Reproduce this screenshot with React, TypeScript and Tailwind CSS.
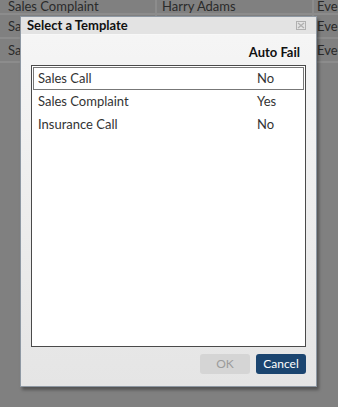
import React from "react";

const rows = [
  { name: "Sales Call", fail: "No", selected: true },
  { name: "Sales Complaint", fail: "Yes" },
  { name: "Insurance Call", fail: "No" },
];

export default function App() {
  const font = { fontFamily: "Lato, 'Open Sans', sans-serif" };
  return (
    <div className="relative w-[338px] h-[407px] overflow-hidden bg-[#808080]" style={font}>
      {/* background table (dimmed) */}
      <div className="flex flex-col text-[13px] text-[#2a2a2a]">
        {[
          ["Sales Complaint", "Harry Adams", "Even"],
          ["Sales Complaint", "Harry Adams", "Even"],
          ["Sales Complaint", "Harry Adams", "Even"],
        ].map((r, i) => (
          <div
            key={i}
            className={`flex border-b-[2px] border-[#8c8c8c] ${i === 0 ? "h-[15px] items-end" : "h-[24px] items-center"}`}
          >
            <div className="w-[157px] pl-[8px] border-r-[2px] border-[#8c8c8c] h-full flex items-center leading-none whitespace-nowrap overflow-hidden">
              {r[0]}
            </div>
            <div className="w-[157px] pl-[5px] border-r-[2px] border-[#8c8c8c] h-full flex items-center leading-none whitespace-nowrap overflow-hidden">
              {r[1]}
            </div>
            <div className="flex-1 pl-[3px] h-full flex items-center leading-none whitespace-nowrap overflow-hidden">
              {r[2]}
            </div>
          </div>
        ))}
      </div>

      {/* dialog */}
      <div className="absolute left-[20px] top-[16px] w-[297px] h-[371px] flex flex-col border border-[#8e98a3] shadow-[2px_3px_3px_rgba(0,0,0,0.35)] bg-gradient-to-b from-[#f6f6f6] to-[#e5e5e5]">
        <div className="h-[18px] flex items-center justify-between pl-[6px] pr-[10px] bg-[#e3e3e3] border-b border-[#f8f8f8]">
          <span className="text-[13px] font-bold text-[#111] leading-none">Select a Template</span>
          <svg width="10" height="9" viewBox="0 0 10 9" className="text-[#b0b0b0]">
            <rect x="0.5" y="0.5" width="9" height="8" fill="none" stroke="currentColor" />
            <path d="M2 2 L8 7 M8 2 L2 7" stroke="currentColor" strokeWidth="1.3" />
          </svg>
        </div>
        <div className="flex-1 flex flex-col px-[10px]">
          <div className="h-[30px] flex items-center justify-end pr-[6px] pt-[5px]">
            <span className="text-[13px] font-bold text-[#111]">Auto Fail</span>
          </div>
          <div className="h-[282px] bg-white border border-[#4a4a4a] p-[1px] flex flex-col">
            {rows.map((r) => (
              <div
                key={r.name}
                className={`h-[23px] flex items-center text-[13px] text-[#333] ${r.selected ? "border border-[#777]" : "border border-transparent"}`}
              >
                <span className="w-[223px] pl-[4px]">{r.name}</span>
                <span>{r.fail}</span>
              </div>
            ))}
          </div>
          <div className="flex justify-end gap-[6px] mt-[7px]">
            <button className="w-[50px] h-[20px] rounded-[3px] bg-[#d5d5d5] text-[#9b9b9b] text-[12px] leading-none">OK</button>
            <button className="w-[50px] h-[20px] rounded-[3px] bg-[#1b4570] text-white text-[12px] leading-none">Cancel</button>
          </div>
        </div>
      </div>
    </div>
  );
}
